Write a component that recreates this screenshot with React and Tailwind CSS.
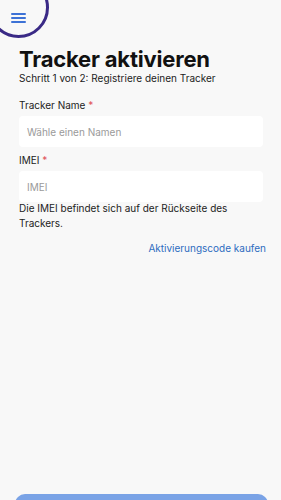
import React from 'react';

const Field = ({ label, placeholder }) => (
  <div>
    <label className="block text-[10px] leading-[14px] text-[#222]">
      {label} <span className="text-[#e0525a]">*</span>
    </label>
    <input
      placeholder={placeholder}
      className="mt-[4px] w-full h-[31px] rounded-[4px] bg-white px-2 text-[10px] text-[#222] placeholder:text-[#9a9a9a] outline-none"
    />
  </div>
);

export default function App() {
  return (
    <div
      className="relative w-[281px] h-[500px] overflow-hidden bg-[#f8f8f8]"
      style={{ fontFamily: 'Inter, "Noto Sans", sans-serif' }}
    >
      {/* menu ring */}
      <div className="absolute -left-[12px] -top-[23px] w-[61px] h-[61px] rounded-full border-[3px] border-[#3a2a86]" />
      <button className="absolute left-[11px] top-[13px] flex flex-col gap-[2px]">
        <span className="block w-[15px] h-[2px] rounded bg-[#3d72d6]" />
        <span className="block w-[15px] h-[2px] rounded bg-[#3d72d6]" />
        <span className="block w-[15px] h-[2px] rounded bg-[#3d72d6]" />
      </button>

      <div className="pl-[19px] pt-[46px] pr-[18px]">
        <h1 className="text-[22px] leading-[26px] font-bold tracking-[-0.2px] text-[#111]">
          Tracker aktivieren
        </h1>
        <p className="text-[10px] leading-[13px] text-[#222]">
          Schritt 1 von 2: Registriere deinen Tracker
        </p>

        <div className="mt-[13px] flex flex-col gap-[6px]">
          <Field label="Tracker Name" placeholder="Wähle einen Namen" />
          <Field label="IMEI" placeholder="IMEI" />
        </div>

        <p className="-mt-[1px] text-[10px] leading-[15px] text-[#222]">
          Die IMEI befindet sich auf der Rückseite des Trackers.
        </p>

        <div className="mt-[10px] flex justify-end -mr-[3px]">
          <a className="text-[10px] leading-[14px] text-[#2d6cc0]">Aktivierungscode kaufen</a>
        </div>
      </div>

      <button className="absolute left-[15px] right-[13px] top-[494px] h-[40px] rounded-[10px] bg-[#7aa3e6]" />
    </div>
  );
}
